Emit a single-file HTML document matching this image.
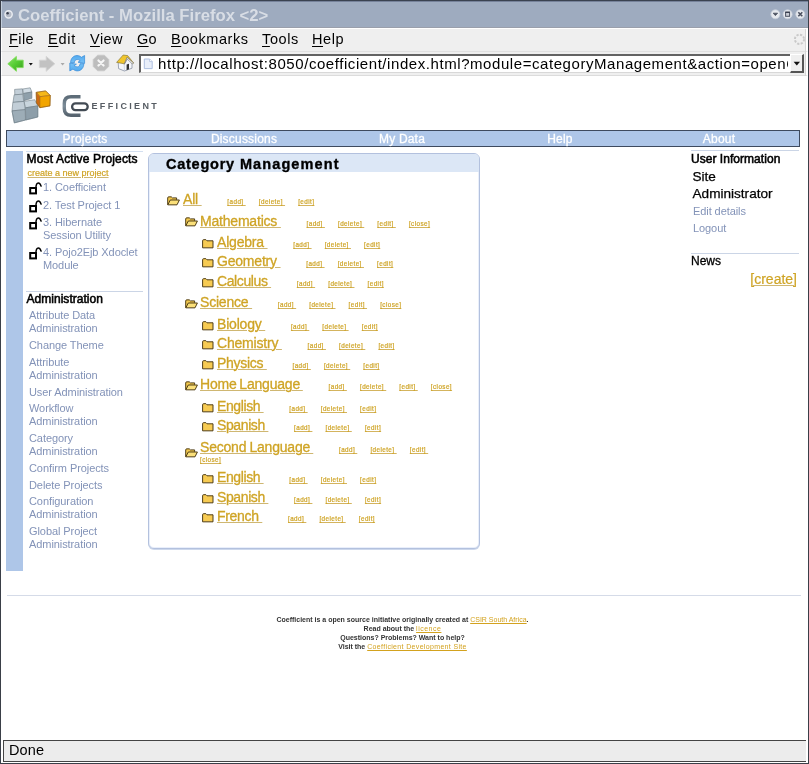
<!DOCTYPE html>
<html>
<head>
<meta charset="utf-8">
<title>Coefficient - Mozilla Firefox</title>
<style>
html,body{margin:0;padding:0;}
body{width:809px;height:764px;position:relative;overflow:hidden;background:#fff;-webkit-font-smoothing:antialiased;font-family:"Liberation Sans",sans-serif;color:#000;}
*{box-sizing:border-box;}
.abs{position:absolute;}
a{text-decoration:underline;}
/* ---------- window chrome ---------- */
#titlebar{left:0;top:0;width:809px;height:28px;background:#9eabbf;border-top:1px solid #3a4250;box-shadow:inset 0 1px 0 #76829a;border-bottom:1px solid #9a9fab;}
#title{left:18px;top:6px;font-size:16.7px;font-weight:bold;color:#d8dde5;white-space:nowrap;line-height:20px;}
#menubar{left:1px;top:28px;width:807px;height:23px;background:#efefef;border-top:1px solid #fff;border-left:1px solid #fff;border-right:2px solid #fff;}
.mi{top:29px;font-size:14.5px;line-height:20px;color:#000;white-space:nowrap;}
.mi u{text-decoration:underline;text-underline-offset:2px;}
#toolbar{left:1px;top:51px;width:807px;height:25px;border-left:1px solid #fff;border-right:2px solid #fff;background:#efefef;border-top:1px solid #e0e0e0;border-bottom:1px solid #dcdcdc;}
#urlbox{left:139px;top:54px;width:652px;height:19px;background:#fff;border:2px solid #636363;border-right:none;border-bottom:1px solid #d8d8d8;border-left:2px solid #636363;overflow:hidden;}
#urltext{left:158px;top:54px;width:630px;height:19px;overflow:hidden;white-space:nowrap;font-size:15px;line-height:19px;letter-spacing:0.566px;color:#000;}
#urldrop{left:790px;top:54px;width:14px;height:19px;background:#efefef;border:1px solid #fff;border-right:2px solid #555;border-bottom:2px solid #555;}
#lborder{left:0;top:0;width:1px;height:764px;background:#3a3f48;}
#lb2{left:1px;top:1px;width:1px;height:27px;background:#c3cedc;}
#rborder{left:808px;top:0;width:1px;height:764px;background:#3a3f48;}
#rb2{left:805px;top:29px;width:1px;height:47px;background:#d6d6d6;}
#bborder{left:0;top:763px;width:809px;height:1px;background:#3a3f48;}
#statusbar{left:1px;top:739px;width:807px;height:24px;background:#fff;}
#statusin{left:3px;top:740px;width:803px;height:22px;background:#ececec;border:1px solid #444;border-right:none;}
#done{left:9px;top:740px;font-size:14.5px;line-height:20px;letter-spacing:0.1px;}
/* ---------- page ---------- */
#nav{left:6px;top:130px;width:794px;height:17px;background:#aec6e8;border:1px solid #3e4a5e;}
.nv{top:131px;font-size:12px;line-height:16px;color:#fff;white-space:nowrap;letter-spacing:0.2px;-webkit-text-stroke:0.3px #fff;}
#stripe{left:6px;top:151px;width:16.6px;height:420px;background:#aec6e8;}
.hl{height:1px;background:#cbd5e6;}
.sh{font-size:12px;font-weight:normal;-webkit-text-stroke:0.55px #000;line-height:14px;white-space:nowrap;color:#000;}
.sl{font-size:11px;line-height:13px;letter-spacing:-0.08px;color:#8393b8;white-space:nowrap;}
.ol{color:#cfa425;-webkit-text-stroke:0.2px #cfa425;text-decoration:underline;text-decoration-color:#cfb772;text-decoration-thickness:1px;}
#panel{left:148px;top:153px;width:332px;height:396px;border:1px solid #b3c1de;border-radius:6px;background:#fff;overflow:hidden;box-shadow:0 1px 0 #cdd8ec, inset 0 0 0 1px #e9effb;}
#phead{left:0;top:0;width:330px;height:18px;background:#dce7f6;}
#ptitle{left:166px;top:155px;font-size:14.5px;font-weight:bold;line-height:18px;letter-spacing:0.98px;-webkit-text-stroke:0.35px #000;white-space:nowrap;}
.cat{font-size:14px;line-height:16px;color:#cfa425;-webkit-text-stroke:0.3px #cfa425;text-decoration:underline;text-decoration-color:#cfb772;text-decoration-thickness:1px;white-space:pre;letter-spacing:-0.2px;}
.act{font-size:6.3px;line-height:9px;-webkit-text-stroke:0.2px #cfa425;color:#cfa425;text-decoration:underline;text-decoration-thickness:1px;text-decoration-color:#d4b45e;white-space:pre;letter-spacing:0.43px;}
.ft{font-size:7px;font-weight:bold;line-height:9px;white-space:nowrap;color:#333;width:809px;left:-2px;text-align:center;}
.ft a{font-weight:normal;color:#d3a21e;}
.row{white-space:nowrap;line-height:16px;font-size:14px;}
.g1{margin-left:25.7px;}
.g2{margin-left:13.1px;}
</style>
</head>
<body><div id="wrap" style="position:absolute;left:0;top:0;width:809px;height:764px;will-change:transform;">
<!-- chrome -->
<div id="titlebar" class="abs"></div>
<div id="title" class="abs">Coefficient - Mozilla Firefox &lt;2&gt;</div>
<div id="menubar" class="abs"></div>
<div id="toolbar" class="abs"></div>
<div id="urlbox" class="abs"></div>
<div id="urltext" class="abs"><span id="u1">http://localhost:8050/coefficient/index.html?module=categoryManagement&amp;action=open</span>Category</div>
<div id="urldrop" class="abs"></div>
<div id="statusbar" class="abs"></div>
<div id="statusin" class="abs"></div>
<div id="done" class="abs">Done</div>
<div class="abs mi" id="m1" style="left:9px;letter-spacing:0.4px"><u>F</u>ile</div>
<div class="abs mi" id="m2" style="left:48px;letter-spacing:0.75px"><u>E</u>dit</div>
<div class="abs mi" id="m3" style="left:90px;letter-spacing:0.47px"><u>V</u>iew</div>
<div class="abs mi" id="m4" style="left:137px;letter-spacing:0.33px"><u>G</u>o</div>
<div class="abs mi" id="m5" style="left:171px;letter-spacing:0.55px"><u>B</u>ookmarks</div>
<div class="abs mi" id="m6" style="left:262px;letter-spacing:0.62px"><u>T</u>ools</div>
<div class="abs mi" id="m7" style="left:312px;letter-spacing:0.55px"><u>H</u>elp</div>
<!-- PAGE -->
<div id="nav" class="abs"></div>
<div id="stripe" class="abs"></div>
<div class="abs nv" style="left:25px;width:120px;text-align:center">Projects</div>
<div class="abs nv" style="left:184px;width:120px;text-align:center">Discussions</div>
<div class="abs nv" style="left:342px;width:120px;text-align:center">My Data</div>
<div class="abs nv" style="left:500px;width:120px;text-align:center">Help</div>
<div class="abs nv" style="left:659px;width:120px;text-align:center">About</div>
<div class="abs hl" style="left:26px;top:151px;width:117px;background:#d3dff0"></div>
<div class="abs sh" style="left:26.5px;top:152px;letter-spacing:0.16px">Most Active Projects</div>
<div class="abs ol" style="left:27.5px;top:168px;font-size:9px;line-height:11px;white-space:nowrap">create a new project</div>
<svg class="abs lock" style="left:29px;top:181px" width="14" height="14" viewBox="0 0 14 14"><rect x="1.2" y="7" width="5.8" height="5.4" fill="#fff" stroke="#000" stroke-width="2"/><path d="M6.9 7.2 Q7 1.9 9.3 1.9 Q11.2 1.9 12.3 5.6" fill="none" stroke="#000" stroke-width="1.5"/></svg>
<div class="abs sl" style="left:43px;top:181px">1. Coefficient</div>
<svg class="abs lock" style="left:29px;top:199px" width="14" height="14" viewBox="0 0 14 14"><rect x="1.2" y="7" width="5.8" height="5.4" fill="#fff" stroke="#000" stroke-width="2"/><path d="M6.9 7.2 Q7 1.9 9.3 1.9 Q11.2 1.9 12.3 5.6" fill="none" stroke="#000" stroke-width="1.5"/></svg>
<div class="abs sl" style="left:43px;top:199px">2. Test Project 1</div>
<svg class="abs lock" style="left:29px;top:216px" width="14" height="14" viewBox="0 0 14 14"><rect x="1.2" y="7" width="5.8" height="5.4" fill="#fff" stroke="#000" stroke-width="2"/><path d="M6.9 7.2 Q7 1.9 9.3 1.9 Q11.2 1.9 12.3 5.6" fill="none" stroke="#000" stroke-width="1.5"/></svg>
<div class="abs sl" style="left:43px;top:216px">3. Hibernate</div>
<div class="abs sl" style="left:43px;top:229px">Session Utility</div>
<svg class="abs lock" style="left:29px;top:246px" width="14" height="14" viewBox="0 0 14 14"><rect x="1.2" y="7" width="5.8" height="5.4" fill="#fff" stroke="#000" stroke-width="2"/><path d="M6.9 7.2 Q7 1.9 9.3 1.9 Q11.2 1.9 12.3 5.6" fill="none" stroke="#000" stroke-width="1.5"/></svg>
<div class="abs sl" style="left:43px;top:246px">4. Pojo2Ejb Xdoclet</div>
<div class="abs sl" style="left:43px;top:259px">Module</div>
<div class="abs hl" style="left:26px;top:291px;width:117px"></div>
<div class="abs sh" style="left:26.5px;top:292px;letter-spacing:0.03px">Administration</div>
<div class="abs sl" style="left:29px;top:309px">Attribute Data</div>
<div class="abs sl" style="left:29px;top:322px">Administration</div>
<div class="abs sl" style="left:29px;top:339px">Change Theme</div>
<div class="abs sl" style="left:29px;top:356px">Attribute</div>
<div class="abs sl" style="left:29px;top:369px">Administration</div>
<div class="abs sl" style="left:29px;top:386px">User Administration</div>
<div class="abs sl" style="left:29px;top:402px">Workflow</div>
<div class="abs sl" style="left:29px;top:415px">Administration</div>
<div class="abs sl" style="left:29px;top:432px">Category</div>
<div class="abs sl" style="left:29px;top:445px">Administration</div>
<div class="abs sl" style="left:29px;top:462px">Confirm Projects</div>
<div class="abs sl" style="left:29px;top:479px">Delete Projects</div>
<div class="abs sl" style="left:29px;top:495px">Configuration</div>
<div class="abs sl" style="left:29px;top:508px">Administration</div>
<div class="abs sl" style="left:29px;top:525px">Global Project</div>
<div class="abs sl" style="left:29px;top:538px">Administration</div>
<div id="panel" class="abs"><div id="phead" class="abs"></div></div>
<div id="ptitle" class="abs"><span id="pt1" style="letter-spacing:0.75px">Category</span> <span id="pt2" style="letter-spacing:1.11px">Management</span></div>
<div class="abs hl" style="left:691px;top:150px;width:108px"></div>
<div class="abs sh" style="left:691px;top:152px;letter-spacing:0.04px">User Information</div>
<div class="abs" style="left:692.5px;top:168px;font-size:13.6px;line-height:17px;-webkit-text-stroke:0.25px #000">Site<br>Administrator</div>
<div class="abs sl" style="left:693px;top:204px;font-size:11px;line-height:14px">Edit details</div>
<div class="abs sl" style="left:693px;top:221px;font-size:11px;line-height:14px">Logout</div>
<div class="abs hl" style="left:691px;top:253px;width:108px"></div>
<div class="abs" style="left:691px;top:254px;font-size:12px;line-height:14px;-webkit-text-stroke:0.3px #000">News</div>
<div class="abs ol" style="left:697px;width:100px;text-align:right;top:271px;font-size:14px;line-height:16px">[create]</div>
<div class="abs" style="left:7px;top:595px;width:794px;height:1px;background:#d5dbe8"></div>
<div class="abs ft" style="top:615px">Coefficient is a open source initiative originally created at <a>CSIR South Africa</a>.</div>
<div class="abs ft" style="top:624px">Read about the <a style="letter-spacing:0.5px">licence</a></div>
<div class="abs ft" style="top:633px">Questions? Problems? Want to help?</div>
<div class="abs ft" style="top:642px">Visit the <a style="letter-spacing:0.34px">Coefficient Development Site</a></div>
<!-- TREE -->
<svg class="abs" style="left:167px;top:196px" width="13" height="9.5" viewBox="0 0 13 10" preserveAspectRatio="none"><path d="M0.7 9.2 V2 Q0.7 0.9 1.8 0.9 H4.3 L5.4 2 H9.6 V4" fill="#f3c94e" stroke="#4b3a12" stroke-width="1"/><path d="M0.8 9.3 L3.3 4.2 H12.4 L10 9.3 Z" fill="#fbe07a" stroke="#4b3a12" stroke-width="1" stroke-linejoin="round"/></svg>
<div class="abs row" style="left:183px;top:191px"><span class="cat">All </span><span class="act g1">[add] </span><span class="act g2">[delete] </span><span class="act g2">[edit]</span></div>
<svg class="abs" style="left:185px;top:217px" width="13" height="9.5" viewBox="0 0 13 10" preserveAspectRatio="none"><path d="M0.7 9.2 V2 Q0.7 0.9 1.8 0.9 H4.3 L5.4 2 H9.6 V4" fill="#f3c94e" stroke="#4b3a12" stroke-width="1"/><path d="M0.8 9.3 L3.3 4.2 H12.4 L10 9.3 Z" fill="#fbe07a" stroke="#4b3a12" stroke-width="1" stroke-linejoin="round"/></svg>
<div class="abs row" style="left:200px;top:213px"><span class="cat">Mathematics </span><span class="act g1">[add] </span><span class="act g2">[delete] </span><span class="act g2">[edit] </span><span class="act g2">[close]</span></div>
<svg class="abs" style="left:202px;top:239px" width="12" height="9.5" viewBox="0 0 12 10" preserveAspectRatio="none"><path d="M0.6 9.3 V1.8 Q0.6 0.7 1.7 0.7 H3.9 L5 1.9 H11 V9.3 Z" fill="#f7cb52" stroke="#4b3a12" stroke-width="1" stroke-linejoin="round"/></svg>
<div class="abs row" style="left:217px;top:234px"><span class="cat">Algebra </span><span class="act g1">[add] </span><span class="act g2">[delete] </span><span class="act g2">[edit]</span></div>
<svg class="abs" style="left:202px;top:258px" width="12" height="9.5" viewBox="0 0 12 10" preserveAspectRatio="none"><path d="M0.6 9.3 V1.8 Q0.6 0.7 1.7 0.7 H3.9 L5 1.9 H11 V9.3 Z" fill="#f7cb52" stroke="#4b3a12" stroke-width="1" stroke-linejoin="round"/></svg>
<div class="abs row" style="left:217px;top:253px"><span class="cat">Geometry </span><span class="act g1">[add] </span><span class="act g2">[delete] </span><span class="act g2">[edit]</span></div>
<svg class="abs" style="left:202px;top:278px" width="12" height="9.5" viewBox="0 0 12 10" preserveAspectRatio="none"><path d="M0.6 9.3 V1.8 Q0.6 0.7 1.7 0.7 H3.9 L5 1.9 H11 V9.3 Z" fill="#f7cb52" stroke="#4b3a12" stroke-width="1" stroke-linejoin="round"/></svg>
<div class="abs row" style="left:217px;top:273px"><span class="cat" style="letter-spacing:-0.39px">Calculus </span><span class="act g1">[add] </span><span class="act g2">[delete] </span><span class="act g2">[edit]</span></div>
<svg class="abs" style="left:185px;top:299px" width="13" height="9.5" viewBox="0 0 13 10" preserveAspectRatio="none"><path d="M0.7 9.2 V2 Q0.7 0.9 1.8 0.9 H4.3 L5.4 2 H9.6 V4" fill="#f3c94e" stroke="#4b3a12" stroke-width="1"/><path d="M0.8 9.3 L3.3 4.2 H12.4 L10 9.3 Z" fill="#fbe07a" stroke="#4b3a12" stroke-width="1" stroke-linejoin="round"/></svg>
<div class="abs row" style="left:200px;top:294px"><span class="cat">Science </span><span class="act g1">[add] </span><span class="act g2">[delete] </span><span class="act g2">[edit] </span><span class="act g2">[close]</span></div>
<svg class="abs" style="left:202px;top:321px" width="12" height="9.5" viewBox="0 0 12 10" preserveAspectRatio="none"><path d="M0.6 9.3 V1.8 Q0.6 0.7 1.7 0.7 H3.9 L5 1.9 H11 V9.3 Z" fill="#f7cb52" stroke="#4b3a12" stroke-width="1" stroke-linejoin="round"/></svg>
<div class="abs row" style="left:217px;top:316px"><span class="cat">Biology </span><span class="act g1">[add] </span><span class="act g2">[delete] </span><span class="act g2">[edit]</span></div>
<svg class="abs" style="left:202px;top:340px" width="12" height="9.5" viewBox="0 0 12 10" preserveAspectRatio="none"><path d="M0.6 9.3 V1.8 Q0.6 0.7 1.7 0.7 H3.9 L5 1.9 H11 V9.3 Z" fill="#f7cb52" stroke="#4b3a12" stroke-width="1" stroke-linejoin="round"/></svg>
<div class="abs row" style="left:217px;top:335px"><span class="cat">Chemistry </span><span class="act g1">[add] </span><span class="act g2">[delete] </span><span class="act g2">[edit]</span></div>
<svg class="abs" style="left:202px;top:360px" width="12" height="9.5" viewBox="0 0 12 10" preserveAspectRatio="none"><path d="M0.6 9.3 V1.8 Q0.6 0.7 1.7 0.7 H3.9 L5 1.9 H11 V9.3 Z" fill="#f7cb52" stroke="#4b3a12" stroke-width="1" stroke-linejoin="round"/></svg>
<div class="abs row" style="left:217px;top:355px"><span class="cat" style="letter-spacing:-0.29px">Physics </span><span class="act g1">[add] </span><span class="act g2">[delete] </span><span class="act g2">[edit]</span></div>
<svg class="abs" style="left:185px;top:381px" width="13" height="9.5" viewBox="0 0 13 10" preserveAspectRatio="none"><path d="M0.7 9.2 V2 Q0.7 0.9 1.8 0.9 H4.3 L5.4 2 H9.6 V4" fill="#f3c94e" stroke="#4b3a12" stroke-width="1"/><path d="M0.8 9.3 L3.3 4.2 H12.4 L10 9.3 Z" fill="#fbe07a" stroke="#4b3a12" stroke-width="1" stroke-linejoin="round"/></svg>
<div class="abs row" style="left:200px;top:376px"><span class="cat" style="word-spacing:-0.9px">Home Language </span><span class="act g1">[add] </span><span class="act g2">[delete] </span><span class="act g2">[edit] </span><span class="act g2">[close]</span></div>
<svg class="abs" style="left:202px;top:403px" width="12" height="9.5" viewBox="0 0 12 10" preserveAspectRatio="none"><path d="M0.6 9.3 V1.8 Q0.6 0.7 1.7 0.7 H3.9 L5 1.9 H11 V9.3 Z" fill="#f7cb52" stroke="#4b3a12" stroke-width="1" stroke-linejoin="round"/></svg>
<div class="abs row" style="left:217px;top:398px"><span class="cat" style="letter-spacing:-0.4px">English </span><span class="act g1">[add] </span><span class="act g2">[delete] </span><span class="act g2">[edit]</span></div>
<svg class="abs" style="left:202px;top:422px" width="12" height="9.5" viewBox="0 0 12 10" preserveAspectRatio="none"><path d="M0.6 9.3 V1.8 Q0.6 0.7 1.7 0.7 H3.9 L5 1.9 H11 V9.3 Z" fill="#f7cb52" stroke="#4b3a12" stroke-width="1" stroke-linejoin="round"/></svg>
<div class="abs row" style="left:217px;top:417px"><span class="cat" style="letter-spacing:-0.39px">Spanish </span><span class="act g1">[add] </span><span class="act g2">[delete] </span><span class="act g2">[edit]</span></div>
<svg class="abs" style="left:185px;top:448px" width="13" height="9.5" viewBox="0 0 13 10" preserveAspectRatio="none"><path d="M0.7 9.2 V2 Q0.7 0.9 1.8 0.9 H4.3 L5.4 2 H9.6 V4" fill="#f3c94e" stroke="#4b3a12" stroke-width="1"/><path d="M0.8 9.3 L3.3 4.2 H12.4 L10 9.3 Z" fill="#fbe07a" stroke="#4b3a12" stroke-width="1" stroke-linejoin="round"/></svg>
<div class="abs row" style="left:200px;top:439px"><span class="cat" style="word-spacing:-0.55px">Second Language </span><span class="act g1">[add] </span><span class="act g2">[delete] </span><span class="act g2">[edit] </span></div>
<div class="abs row" style="left:200px;top:449px"><span class="act">[close]</span></div>
<svg class="abs" style="left:202px;top:474px" width="12" height="9.5" viewBox="0 0 12 10" preserveAspectRatio="none"><path d="M0.6 9.3 V1.8 Q0.6 0.7 1.7 0.7 H3.9 L5 1.9 H11 V9.3 Z" fill="#f7cb52" stroke="#4b3a12" stroke-width="1" stroke-linejoin="round"/></svg>
<div class="abs row" style="left:217px;top:469px"><span class="cat" style="letter-spacing:-0.4px">English </span><span class="act g1">[add] </span><span class="act g2">[delete] </span><span class="act g2">[edit]</span></div>
<svg class="abs" style="left:202px;top:494px" width="12" height="9.5" viewBox="0 0 12 10" preserveAspectRatio="none"><path d="M0.6 9.3 V1.8 Q0.6 0.7 1.7 0.7 H3.9 L5 1.9 H11 V9.3 Z" fill="#f7cb52" stroke="#4b3a12" stroke-width="1" stroke-linejoin="round"/></svg>
<div class="abs row" style="left:217px;top:489px"><span class="cat" style="letter-spacing:-0.39px">Spanish </span><span class="act g1">[add] </span><span class="act g2">[delete] </span><span class="act g2">[edit]</span></div>
<svg class="abs" style="left:202px;top:513px" width="12" height="9.5" viewBox="0 0 12 10" preserveAspectRatio="none"><path d="M0.6 9.3 V1.8 Q0.6 0.7 1.7 0.7 H3.9 L5 1.9 H11 V9.3 Z" fill="#f7cb52" stroke="#4b3a12" stroke-width="1" stroke-linejoin="round"/></svg>
<div class="abs row" style="left:217px;top:508px"><span class="cat" style="letter-spacing:-0.31px">French </span><span class="act g1">[add] </span><span class="act g2">[delete] </span><span class="act g2">[edit]</span></div>

<!-- title icon + window buttons -->
<svg class="abs" style="left:3px;top:8px" width="12" height="12" viewBox="0 0 12 12"><circle cx="5.6" cy="6.3" r="3.6" fill="#b4bac6" stroke="#e9ecf1" stroke-width="1.5"/><circle cx="4.6" cy="5.2" r="1.2" fill="#3a404e"/></svg>
<svg class="abs" style="left:769px;top:8px" width="38" height="13" viewBox="0 0 38 13">
<circle cx="6.4" cy="6.3" r="4.5" fill="#e6e9ee" stroke="#c9cfda" stroke-width="0.8"/>
<path d="M4.2 5.2 L6.4 7.6 L8.6 5.2 Z" fill="#4a5060" stroke="#4a5060" stroke-width="0.8" stroke-linejoin="round"/>
<circle cx="18.6" cy="6.3" r="4.5" fill="#e6e9ee" stroke="#c9cfda" stroke-width="0.8"/>
<rect x="16.6" y="4.3" width="4" height="4" fill="#c9ccd4" stroke="#4a5060" stroke-width="1"/><path d="M16.3 4.3 H20.9" stroke="#3a4050" stroke-width="1.4"/>
<circle cx="31.3" cy="6.3" r="4.5" fill="#e6e9ee" stroke="#c9cfda" stroke-width="0.8"/>
<path d="M29.3 4.3 L33.3 8.3 M33.3 4.3 L29.3 8.3" stroke="#4a5060" stroke-width="1.6"/>
</svg>
<!-- throbber -->
<svg class="abs" style="left:793px;top:33px" width="13" height="13" viewBox="0 0 13 13"><circle cx="6.5" cy="6.3" r="4.6" fill="none" stroke="#c9c9c9" stroke-width="2" stroke-dasharray="2.2 1.4"/></svg>
<!-- back -->
<svg class="abs" style="left:6px;top:54px" width="20" height="20" viewBox="0 0 20 20">
<defs><linearGradient id="gg" x1="0" y1="0" x2="1" y2="1"><stop offset="0" stop-color="#8ee66a"/><stop offset="0.5" stop-color="#55cc33"/><stop offset="1" stop-color="#3a9c20"/></linearGradient></defs>
<path d="M1.8 9.8 L10.4 2.4 V6.2 H17.2 V13.6 H10.4 V17.3 Z" fill="url(#gg)" stroke="#7fdc5a" stroke-width="0.9" stroke-linejoin="round"/></svg>
<svg class="abs" style="left:28px;top:62px" width="6" height="5" viewBox="0 0 6 5"><path d="M0.8 1 H4.8 L2.8 3.6 Z" fill="#111"/></svg>
<!-- forward -->
<svg class="abs" style="left:37px;top:54px" width="20" height="20" viewBox="0 0 20 20">
<path d="M17.8 9.8 L9.2 2.4 V6.2 H2.4 V13.6 H9.2 V17.3 Z" fill="#c2c2c2" stroke="#d2d2d2" stroke-width="0.9" stroke-linejoin="round"/></svg>
<svg class="abs" style="left:60px;top:62px" width="6" height="5" viewBox="0 0 6 5"><path d="M0.6 1 H4.6 L2.6 3.6 Z" fill="#aaa"/></svg>
<!-- reload -->
<svg class="abs" style="left:68px;top:54px" width="19" height="19" viewBox="0 0 19 19">
<defs><linearGradient id="bg1" x1="0" y1="0" x2="0" y2="1"><stop offset="0" stop-color="#52a9ee"/><stop offset="1" stop-color="#78c2f6"/></linearGradient></defs>
<path d="M2.6 8.7 C2.6 4.5 5.4 1.5 9 1.5 C10.8 1.5 12.3 2.2 13.4 3.3 L16.6 1.5 L16.6 9.4 L10 8.2 L12.2 6.8 C11.5 5.9 10.4 5.5 9.2 5.5 C7.4 5.5 6.4 6.9 6.4 8.7 Z" fill="url(#bg1)" stroke="#338ad8" stroke-width="0.7" stroke-linejoin="round"/>
<path d="M2.6 8.7 C2.6 4.5 5.4 1.5 9 1.5 C10.8 1.5 12.3 2.2 13.4 3.3 L16.6 1.5 L16.6 9.4 L10 8.2 L12.2 6.8 C11.5 5.9 10.4 5.5 9.2 5.5 C7.4 5.5 6.4 6.9 6.4 8.7 Z" fill="url(#bg1)" stroke="#338ad8" stroke-width="0.7" stroke-linejoin="round" transform="rotate(180 9.2 9.2)"/>
</svg>
<!-- stop -->
<svg class="abs" style="left:92px;top:54px" width="18" height="18" viewBox="0 0 18 18">
<path d="M5.6 1.2 H12.4 L16.8 5.6 V12.4 L12.4 16.8 H5.6 L1.2 12.4 V5.6 Z" fill="#bdbdbd" stroke="#c8c8c8" stroke-width="0.8"/>
<path d="M6.4 6.4 L11.6 11.6 M11.6 6.4 L6.4 11.6" stroke="#f6f6f6" stroke-width="2.1" stroke-linecap="round"/></svg>
<!-- home -->
<svg class="abs" style="left:115px;top:53px" width="20" height="20" viewBox="0 0 20 20">
<path d="M3.2 9.5 L3.6 15.6 L9.4 18 L17 15.2 V9 L12.4 3.2 Z" fill="#f4f6fa" stroke="#8a93a3" stroke-width="0.8" stroke-linejoin="round"/>
<path d="M9.4 18 L9.2 10.4" stroke="#b8c0cc" stroke-width="0.6"/>
<path d="M1.6 9.4 L8.2 2 L12.6 2.6 L18.6 10 L17.6 10.6 L12.2 4.4 L9.4 10.8 Z" fill="#f1c62d" stroke="#8a7a3a" stroke-width="0.7" stroke-linejoin="round"/>
<path d="M12.2 4.4 L9.4 10.8 L9.4 11.2 L12.4 6.2 L17.2 11 L18.6 10 Z" fill="#e8e8e8" stroke="#777" stroke-width="0.6" stroke-linejoin="round"/>
<path d="M11.6 17.2 V11.6 L14 10.8 V16.3 Z" fill="#333"/>
</svg>
<!-- page icon in urlbar -->
<svg class="abs" style="left:143px;top:58px" width="11" height="12" viewBox="0 0 11 12"><path d="M1.3 1 H6.6 L9.2 3.6 V10.6 H1.3 Z" fill="#e9effa" stroke="#aebfe0" stroke-width="1"/><path d="M6.6 1 V3.6 H9.2" fill="#fff" stroke="#aebfe0" stroke-width="0.8"/></svg>
<!-- url dropdown arrow -->
<svg class="abs" style="left:793px;top:61px" width="8" height="6" viewBox="0 0 8 6"><path d="M0.6 0.8 H7 L3.8 4.6 Z" fill="#111"/></svg>
<svg class="abs" style="left:0;top:0" width="170" height="130" viewBox="0 0 170 130"><defs><linearGradient id="cg" x1="0" y1="0" x2="0" y2="1"><stop offset="0" stop-color="#5d6c78"/><stop offset="0.5" stop-color="#7d8d99"/><stop offset="1" stop-color="#56636e"/></linearGradient></defs><polygon points="14.6,89.4 22.4,88.8 22.8,94.2 14.8,94.8" fill="#c3cfd8" stroke="#66767f" stroke-width="0.55" stroke-linejoin="round"/><polygon points="22.7,89.0 30.2,87.8 31.9,92.0 23.5,93.5" fill="#d0dbe3" stroke="#66767f" stroke-width="0.55" stroke-linejoin="round"/><polygon points="23.5,93.5 31.9,92.0 31.9,98.3 23.9,100.7" fill="#8fa0ab" stroke="#66767f" stroke-width="0.55" stroke-linejoin="round"/><polygon points="14.1,94.8 22.8,94.2 23.7,101.4 13.0,102.4" fill="#bcc9d2" stroke="#66767f" stroke-width="0.55" stroke-linejoin="round"/><polygon points="24.1,101.4 34.7,99.7 37.8,105.9 25.4,107.8" fill="#c9d5dd" stroke="#66767f" stroke-width="0.55" stroke-linejoin="round"/><polygon points="12.8,102.4 24.0,101.4 25.2,109.6 12.0,110.9" fill="#c2ced7" stroke="#66767f" stroke-width="0.55" stroke-linejoin="round"/><polygon points="12.0,110.9 25.2,109.6 25.5,120.0 14.3,122.9" fill="#9dadb7" stroke="#66767f" stroke-width="0.55" stroke-linejoin="round"/><polygon points="25.4,107.8 37.8,105.9 37.8,117.0 25.8,120.0" fill="#8d9ea9" stroke="#66767f" stroke-width="0.55" stroke-linejoin="round"/><polygon points="36.5,92.2 45.7,90.9 50.3,95.5 39.9,96.7" fill="#f6b818" stroke="#9a5c10" stroke-width="0.5"/><polygon points="36.2,92.4 39.9,96.7 39.9,107.7 36.5,102.9" fill="#cf6a12" stroke="#9a5c10" stroke-width="0.5"/><polygon points="39.9,96.7 50.3,95.5 50.0,105.9 39.9,107.7" fill="#f2a500" stroke="#9a5c10" stroke-width="0.5"/><polyline points="12.0,110.9 14.3,122.9 25.5,120.0 37.8,117.0 37.8,105.9" fill="none" stroke="#6f808b" stroke-width="0.5"/><polygon points="36.2,92.4 45.7,90.9 50.3,95.5 50.0,105.9 39.9,107.7 36.5,102.9" fill="none" stroke="#8a5a10" stroke-width="0.5"/><path d="M80.5 96.8 H71 Q64.3 96.8 64.3 103.5 V108.6 Q64.3 115.3 71 115.3 H80.5" fill="none" stroke="url(#cg)" stroke-width="3.4"/><rect x="72.1" y="103.3" width="15.6" height="6.8" rx="3.4" ry="3.4" fill="#fff" stroke="#434b54" stroke-width="2.3"/></svg><div class="abs" style="left:91.5px;top:100px;font-size:9px;font-weight:bold;line-height:12px;letter-spacing:2.35px;color:#565c63;white-space:nowrap" id="logot">EFFICIENT</div>
<!-- borders -->
<div id="lborder" class="abs"></div><div id="lb2" class="abs"></div><div id="rb2" class="abs"></div>
<div id="rborder" class="abs"></div>
<div id="bborder" class="abs"></div>
</div></body>
</html>
